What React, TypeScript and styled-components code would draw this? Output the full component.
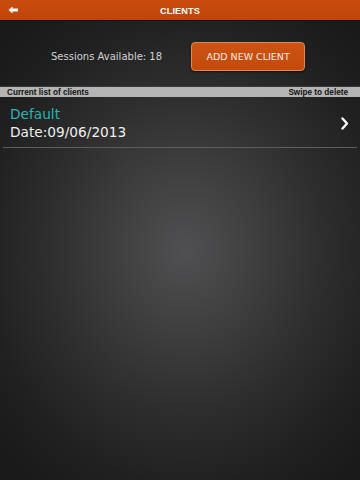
import React from "react";
import styled, { createGlobalStyle } from "styled-components";

const GlobalStyle = createGlobalStyle`
  html, body { margin: 0; padding: 0; background: #1b1b1b; }
  * { box-sizing: border-box; }
`;

const Page = styled.div`
  width: 360px;
  height: 480px;
  overflow: hidden;
  display: flex;
  flex-direction: column;
  background:
    radial-gradient(ellipse 250px 290px at 185px 250px, #505052 0%, #3f3f40 28%, #2e2e2e 55%, #202020 82%, #1a1a1a 100%);
`;

const Header = styled.header`
  height: 21px;
  flex: none;
  display: grid;
  grid-template-columns: 40px 1fr 40px;
  align-items: center;
  background: linear-gradient(#c84c0c, #bf4509);
  border-bottom: 1px solid #1a0c05;
`;

const BackButton = styled.button`
  border: 0;
  background: none;
  padding: 0 0 0 8px;
  height: 100%;
  display: flex;
  align-items: center;
  cursor: pointer;
`;

const Title = styled.h1`
  margin: 0;
  padding-top: 1px;
  text-align: center;
  color: #fff;
  font-family: "Liberation Sans", Arial, sans-serif;
  font-weight: bold;
  font-size: 9.2px;
  letter-spacing: 0.1px;
`;

const TopSection = styled.section`
  flex: none;
  display: flex;
  align-items: center;
  gap: 29px;
  padding: 21px 0 15px 51px;
`;

const Sessions = styled.span`
  color: #d2d2d2;
  font-family: "DejaVu Sans", Verdana, sans-serif;
  font-size: 10px;
`;

const AddButton = styled.button`
  width: 114px;
  height: 29px;
  border-radius: 4px;
  border: 1px solid #de8a5a;
  background: linear-gradient(#cd5312, #c44a0b);
  color: #f7ece6;
  font-family: "DejaVu Sans", Verdana, sans-serif;
  font-size: 9.5px;
  padding: 0;
  box-shadow: 0 1px 2px rgba(0, 0, 0, 0.6);
  cursor: pointer;
`;

const SectionBar = styled.div`
  flex: none;
  height: 11px;
  display: flex;
  align-items: center;
  justify-content: space-between;
  padding: 0 12px 0 7px;
  background: #b4b4b4;
  border-top: 1px solid #3a3a3a;
  font-family: "Liberation Sans", Arial, sans-serif;
  font-weight: bold;
  font-size: 8.2px;
  color: #111;
`;

const ClientRow = styled.div`
  flex: none;
  display: flex;
  align-items: center;
  justify-content: space-between;
  margin: 0 3px;
  padding: 8px 8px 6px 7px;
  border-bottom: 1px solid #5e5e5e;
`;

const ClientText = styled.div`
  display: flex;
  flex-direction: column;
  font-family: "DejaVu Sans", Verdana, sans-serif;
  font-size: 13.7px;
  line-height: 18px;
`;

const ClientName = styled.span`
  color: #27b4b4;
`;

const ClientDate = styled.span`
  color: #f0f0f0;
`;

const Chevron = () => (
  <svg width="8" height="13" viewBox="0 0 8 13">
    <path d="M1.5 1.5 L6 6.5 L1.5 11.5" fill="none" stroke="#fff" strokeWidth="2.4" strokeLinecap="round" strokeLinejoin="round" />
  </svg>
);

const BackArrow = () => (
  <svg width="11" height="8" viewBox="0 0 11 8">
    <path d="M0.5 4 L4.5 0.5 L4.5 2.6 L10 2.6 L10 5.4 L4.5 5.4 L4.5 7.5 Z" fill="#fff" />
  </svg>
);

export default function App() {
  return (
    <>
      <GlobalStyle />
      <Page>
        <Header>
          <BackButton aria-label="Back">
            <BackArrow />
          </BackButton>
          <Title>CLIENTS</Title>
          <span />
        </Header>
        <TopSection>
          <Sessions>Sessions Available: 18</Sessions>
          <AddButton>ADD NEW CLIENT</AddButton>
        </TopSection>
        <SectionBar>
          <span>Current list of clients</span>
          <span>Swipe to delete</span>
        </SectionBar>
        <ClientRow>
          <ClientText>
            <ClientName>Default</ClientName>
            <ClientDate>Date:09/06/2013</ClientDate>
          </ClientText>
          <Chevron />
        </ClientRow>
      </Page>
    </>
  );
}
